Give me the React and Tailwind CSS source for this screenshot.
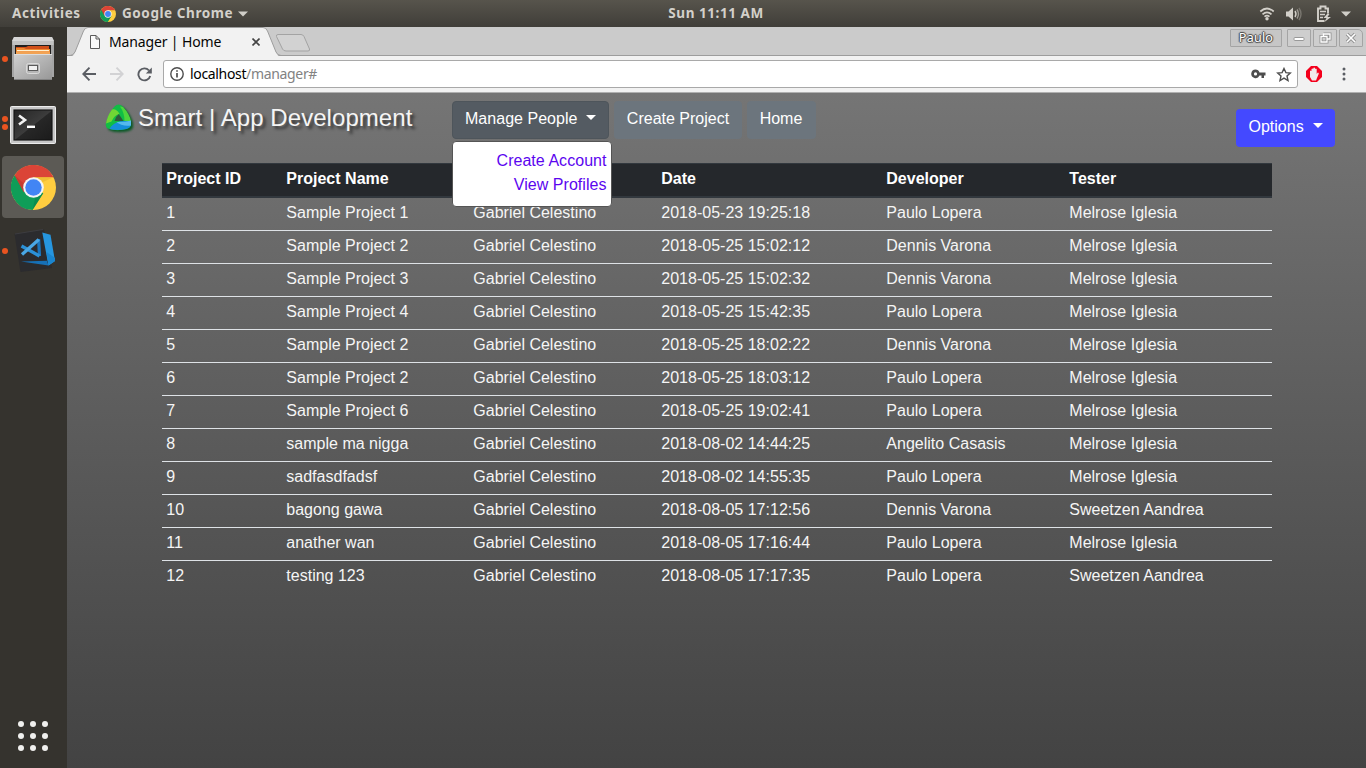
import React from "react";

const columns = "grid grid-cols-[120px_187px_188px_225px_183px_207px]";

const rows = [
  ["1", "Sample Project 1", "2018-05-23 19:25:18", "Paulo Lopera", "Melrose Iglesia"],
  ["2", "Sample Project 2", "2018-05-25 15:02:12", "Dennis Varona", "Melrose Iglesia"],
  ["3", "Sample Project 3", "2018-05-25 15:02:32", "Dennis Varona", "Melrose Iglesia"],
  ["4", "Sample Project 4", "2018-05-25 15:42:35", "Paulo Lopera", "Melrose Iglesia"],
  ["5", "Sample Project 2", "2018-05-25 18:02:22", "Dennis Varona", "Melrose Iglesia"],
  ["6", "Sample Project 2", "2018-05-25 18:03:12", "Paulo Lopera", "Melrose Iglesia"],
  ["7", "Sample Project 6", "2018-05-25 19:02:41", "Paulo Lopera", "Melrose Iglesia"],
  ["8", "sample ma nigga", "2018-08-02 14:44:25", "Angelito Casasis", "Melrose Iglesia"],
  ["9", "sadfasdfadsf", "2018-08-02 14:55:35", "Paulo Lopera", "Melrose Iglesia"],
  ["10", "bagong gawa", "2018-08-05 17:12:56", "Dennis Varona", "Sweetzen Aandrea"],
  ["11", "anather wan", "2018-08-05 17:16:44", "Paulo Lopera", "Melrose Iglesia"],
  ["12", "testing 123", "2018-08-05 17:17:35", "Paulo Lopera", "Sweetzen Aandrea"],
];

function ChromeLogo({ size }) {
  return (
    <svg width={size} height={size} viewBox="0 0 48 48" className="block shrink-0">
      <circle cx="24" cy="24" r="24" fill="#ffcd40" />
      <path d="M24 24 L3.8 11 A24 24 0 0 0 23 48 L34.4 30 Z" fill="#0f9d58" />
      <path d="M24 13 H45.4 A24 24 0 0 0 3.8 11 L13.6 29 Z" fill="#db4437" />
      <path d="M3.8 11 L13.6 29 L14 20 Z" fill="#b8372c" opacity=".6" />
      <path d="M24 13 H45.4 L34 18 Z" fill="#e6b22e" opacity=".6" />
      <path d="M23 48 L34.4 30 L26 34 Z" fill="#0a7d45" opacity=".5" />
      <circle cx="24" cy="24" r="11" fill="#f4f4f4" />
      <circle cx="24" cy="24" r="8.8" fill="#4285f4" />
    </svg>
  );
}

function FilesIcon() {
  return (
    <svg width="46" height="46" viewBox="10 36 46 46">
      <defs>
        <linearGradient id="drawer" x1="0" y1="0" x2="1" y2="1">
          <stop offset="0" stopColor="#d0d0d0" />
          <stop offset="1" stopColor="#979797" />
        </linearGradient>
      </defs>
      <path d="M14 37H52L54 41V77H12V41Z" fill="#a5a5a5" />
      <path d="M14 37H52L54 41H12Z" fill="#d6d6d6" />
      <rect x="12.500" y="41" width="41" height="4" fill="#c2c2c2" />
      <rect x="15" y="45" width="36" height="10" fill="#211f1e" />
      <path d="M16 47H26L28 46H49V50H16Z" fill="#d0501a" />
      <path d="M16 48H24L26 49H50V54H16Z" fill="#ee8a31" />
      <rect x="17" y="50" width="32" height="1.200" fill="#fff0d0" />
      <rect x="16" y="52" width="34" height="2" fill="#f2a354" />
      <rect x="14" y="54" width="38" height="26" rx="1" fill="url(#drawer)" />
      <path d="M14 54.500H52" stroke="#ddd" />
      <path d="M14 79.500H52" stroke="#828282" />
      <rect x="26.500" y="63.500" width="13" height="10" rx="2" fill="#b6b6b6" stroke="#dadada" />
      <rect x="28.500" y="65.500" width="9" height="5" fill="#f0f0f0" stroke="#5a5a5a" />
    </svg>
  );
}

function TerminalIcon() {
  return (
    <svg width="46" height="38" viewBox="0 0 46 38">
      <defs>
        <linearGradient id="screen" x1="0" y1="0" x2="1" y2="1">
          <stop offset="0" stopColor="#252525" />
          <stop offset=".5" stopColor="#3c3c3c" />
          <stop offset=".52" stopColor="#272727" />
          <stop offset="1" stopColor="#1b1b1b" />
        </linearGradient>
      </defs>
      <rect x=".5" y=".5" width="45" height="37" rx="1" fill="#c7c7c7" stroke="#ececec" />
      <rect x="3" y="3" width="40" height="32" fill="#b0b0b0" />
      <rect x="4" y="4" width="38" height="30" fill="url(#screen)" stroke="#111" />
      <path d="M9 9.500L15 14L9 18.500" fill="none" stroke="#f2f2f2" strokeWidth="2.600" />
      <path d="M17 20.800H25" stroke="#fff" strokeWidth="2.400" />
    </svg>
  );
}

function CodeIcon() {
  return (
    <svg width="46" height="46" viewBox="12 228 46 46">
      <path d="M14.500 234L44 229.500L52 268L20.500 272Z" fill="#2b2b2e" />
      <path d="M15 234L43 229.500" stroke="#3c3c40" />
      <path d="M42.300 232.500L50.500 234.800L55 261L48.500 265.500Z" fill="#2696df" />
      <path d="M46.500 252L55 258V261L48.500 265.500Z" fill="#1a85ce" />
      <path d="M21 261.500L47 260.800L48.500 265.500Z" fill="#1670b7" />
      <g fill="none" strokeWidth="3.200">
        <path d="M38.600 239L39.500 256" stroke="#1b75bd" />
        <path d="M21.500 246L39.500 256" stroke="#2b91d8" />
        <path d="M22 254.500L38.800 239.500" stroke="#4aa7e5" />
      </g>
    </svg>
  );
}

function DockItem({ dots, active, children }) {
  return (
    <div className="flex h-[62px] w-[67px] items-center">
      <div className="-mr-2 flex w-2 shrink-0 flex-col items-center gap-[2px] pl-[1px]">
        {Array.from({ length: dots }, (_, i) => (
          <span key={i} className="size-[6px] shrink-0 rounded-full bg-[#e95420]" />
        ))}
      </div>
      <div
        className={
          "ml-[2px] flex size-[62px] items-center justify-center rounded-[4px] " +
          (active ? "bg-[#5c5a55]" : "")
        }
      >
        {children}
      </div>
    </div>
  );
}

function Dock() {
  return (
    <aside className="flex w-[67px] shrink-0 flex-col gap-[2px] bg-[#35332e] pt-px">
      <DockItem dots={1}><FilesIcon /></DockItem>
      <DockItem dots={2}><div className="pt-1"><TerminalIcon /></div></DockItem>
      <DockItem dots={2} active><ChromeLogo size={45} /></DockItem>
      <DockItem dots={1}><div className="pl-1"><CodeIcon /></div></DockItem>
      <div className="mt-auto mb-[17px] ml-[18px] grid w-[30px] grid-cols-3 gap-[6px]">
        {Array.from({ length: 9 }, (_, i) => (
          <span key={i} className="size-[6px] rounded-full bg-[#f0f0ee]" />
        ))}
      </div>
    </aside>
  );
}

function TopBar() {
  return (
    <header className="grid h-[27px] grid-cols-[1fr_auto_1fr] items-center bg-linear-to-b from-[#57544c] to-[#403e39] text-[13.5px] font-bold text-[#d3d0ca]">
      <div className="flex items-center pl-3">
        <span className="w-[88px] whitespace-nowrap tracking-[0.6px]">Activities</span>
        <ChromeLogo size={16} />
        <span className="ml-[6px] w-[111px] whitespace-nowrap tracking-[0.58px]">Google Chrome</span>
        <svg width="10" height="6" viewBox="0 0 10 6" className="ml-[5px]"><path d="M0 .5H10L5 5.500Z" fill="#d0cec8" /></svg>
      </div>
      <span className="translate-x-[33px] whitespace-nowrap tracking-[0.55px]">Sun 11:11 AM</span>
      <div className="flex items-center justify-end pr-[15px]">
        <svg width="16" height="16" viewBox="0 0 16 16" className="-translate-x-px" fill="none" stroke="#d3d0ca" strokeWidth="1.700">
          <path d="M1.300 5.500Q8 -.5 14.700 5.500" /><path d="M3.500 8.300Q8 4.300 12.500 8.300" /><path d="M5.500 10.700Q8 8.700 10.500 10.700" />
          <circle cx="8" cy="12.700" r="1.700" fill="#d3d0ca" stroke="none" />
        </svg>
        <svg width="16" height="16" viewBox="0 0 16 16" className="mr-px ml-[10px]" fill="none" strokeWidth="1.400">
          <path d="M0 5.500H2.500L7 1.500V14.500L2.500 10.500H0Z" fill="#d3d0ca" />
          <path d="M9 5Q11 8 9 11" stroke="#d3d0ca" /><path d="M11 3.500Q14 8 11 12.500" stroke="#9b9891" /><path d="M13 2Q17 8 13 14" stroke="#79766f" />
        </svg>
        <svg width="16" height="18" viewBox="0 0 16 18" className="ml-[13px]" fill="none" stroke="#d3d0ca">
          <path d="M8.500 16H2V3.500H4.500V1.500H9.500V3.500H12V8.500" strokeWidth="1.900" />
          <path d="M4 6.500H10M4 9.500H9M4 12.500H7" strokeWidth="1.700" />
          <path d="M11.500 8.500L7.500 13H10.500L8.500 17L15 12H11.500L13.500 9" fill="#d3d0ca" stroke="none" />
        </svg>
        <svg width="10" height="6" viewBox="0 0 10 6" className="ml-[9px]"><path d="M0 .5H10L5 5.500Z" fill="#d0cec8" /></svg>
      </div>
    </header>
  );
}

function WindowButton({ children, last }) {
  return (
    <span
      className={
        "flex h-[18px] w-6 items-center justify-center rounded-[1px] border border-[#a4a4a4] bg-[#cecece] " +
        (last ? "rounded-tr-[5px]" : "")
      }
    >
      {children}
    </span>
  );
}

function TabStrip() {
  return (
    <div className="relative flex h-[29px] border-b border-[#9d9d9d] bg-[#cbcbcb]">
      <svg width="250" height="29" viewBox="0 0 250 29" className="absolute top-0 left-0">
        <path d="M5 29C7 28 7.500 27 8 25L16.500 4Q18 .5 21 .5H196Q199 .5 200.500 4L209 25Q210 28 212 29Z" fill="#f2f2f2" />
        <path d="M0 28.500H3Q6 28.500 8 25L16.500 4Q18 .5 21 .5H196Q199 .5 200.500 4L209 25Q210.500 28.500 214 28.500" fill="none" stroke="#9d9d9d" />
        <path d="M211 7.500H234Q236 7.500 237 9.500L242.500 22Q243 24 241 24H219Q216.500 24 215.500 22L209.500 9.500Q209 7.500 211 7.500Z" fill="#d2d2d2" stroke="#a3a3a3" />
      </svg>
      <div className="relative flex h-[30px] w-[206px] items-center pl-[23px]">
        <svg width="10" height="14" viewBox="0 0 10 14" fill="#fafafa" stroke="#5a5a5a"><path d="M.5 .5H6L9.500 4V13.500H.5ZM6 .5V4H9.500" /></svg>
        <span className="ml-[9px] w-[143px] pb-[2px] text-[14px] tracking-[-0.14px] whitespace-nowrap text-[#050505]">Manager | Home</span>
        <svg width="8" height="8" viewBox="0 0 8 8" className="shrink-0" stroke="#444" strokeWidth="1.600"><path d="M.5 .5L7.500 7.500M7.500 .5L.5 7.500" /></svg>
      </div>
      <div className="ml-auto flex gap-[2px] pt-[2px] pr-[3px]">
        <span className="mr-[3px] flex h-[18px] w-[52px] items-center justify-center rounded-[1px] border border-[#a4a4a4] bg-[#c6c6c6] text-[12.5px] tracking-[0.25px] text-white [text-shadow:1px_0_1px_#444,-1px_0_1px_#444,0_1px_1px_#444,0_-1px_1px_#444]">Paulo</span>
        <WindowButton><svg width="12" height="12" viewBox="0 0 12 12"><rect x="1" y="5.500" width="10" height="3" rx="1" fill="#fff" stroke="#999" /></svg></WindowButton>
        <WindowButton><svg width="13" height="12" viewBox="0 0 13 12" fill="none"><path d="M4.500 2H11V7H8.500M2 4.500H8V10H2Z" stroke="#929292" strokeWidth="3" /><path d="M4.500 4V2H11V7H8.500M2 4.500H8V10H2Z" stroke="#fff" strokeWidth="1.300" /></svg></WindowButton>
        <WindowButton last><svg width="12" height="12" viewBox="0 0 12 12"><path d="M2 2L10 10M10 2L2 10" stroke="#929292" strokeWidth="3.400" /><path d="M2 2L10 10M10 2L2 10" stroke="#fff" strokeWidth="1.600" /></svg></WindowButton>
      </div>
    </div>
  );
}

function Toolbar() {
  return (
    <div className="flex h-[37px] items-center border-b border-[#b0b0b0] bg-[#f2f2f2] pl-[15px]">
      <svg width="14" height="14" viewBox="0 0 14 14" fill="none" stroke="#5a5d63" strokeWidth="1.900"><path d="M14 7H1.500M7.500 .7L1.300 7L7.500 13.300" /></svg>
      <svg width="14" height="14" viewBox="0 0 14 14" className="ml-[14px]" fill="none" stroke="#d2d2d4" strokeWidth="1.900"><path d="M0 7H12.500M6.500 .7L12.700 7L6.500 13.300" /></svg>
      <svg width="15" height="15" viewBox="0 0 15 15" className="ml-[13px]" fill="none" stroke="#5a5d63" strokeWidth="1.900"><path d="M12 3.500A6 6 0 1 0 13.200 9" /><path d="M14.800 .5V6.500H8.800Z" fill="#5a5d63" stroke="none" /></svg>
      <div className="ml-[11px] flex h-7 w-[1135px] items-center rounded-[3px] border border-[#a9a9a9] bg-white pl-[6px] text-[14px]">
        <svg width="14" height="14" viewBox="0 0 14 14" fill="none" stroke="#4d4d4d" strokeWidth="1.400"><circle cx="7" cy="7" r="6.200" /><path d="M7 6V10.500M7 3.300V4.800" strokeWidth="1.700" /></svg>
        <span className="ml-[6px] pb-[2px] whitespace-nowrap tracking-[-0.34px] text-black">localhost<span className="text-[#828282]">/manager#</span></span>
        <svg width="15" height="10" viewBox="0 0 15 10" className="ml-auto"><path d="M4.500 .5A4.300 4.300 0 1 0 8.500 6.500H10.500V9H13V6.500H14.500V3.500H8.500A4.300 4.300 0 0 0 4.500 .5ZM4.500 3.300A1.600 1.600 0 1 1 4.500 6.500A1.600 1.600 0 1 1 4.500 3.300Z" fill="#4d4d4d" fillRule="evenodd" /></svg>
        <svg width="16" height="15" viewBox="0 0 16 15" className="mr-[5px] ml-[10px]" fill="none" stroke="#4d4d4d" strokeWidth="1.400"><path d="M8 1.500L9.900 5.600L14.300 6L11 9L12 13.500L8 11.100L4 13.500L5 9L1.700 6L6.100 5.600Z" /></svg>
      </div>
      <svg width="16" height="16" viewBox="0 0 16 16" className="ml-2">
        <path d="M5 0H11L16 5V11L11 16H5L0 11V5Z" fill="#f4001c" />
        <path d="M4 5Q4.800 4.200 5.500 5V3Q6.400 2 7.300 3V2Q8.200 1.200 9 2V3Q9.900 2.200 10.700 3V8L11.800 6.500Q13.200 6.500 12.700 8L11 12L10 14.500H6L4 11Z" fill="#f1e9e9" />
      </svg>
      <svg width="4" height="14" viewBox="0 0 4 14" className="ml-5" fill="#5a5d63"><circle cx="2" cy="2" r="1.500" /><circle cx="2" cy="7" r="1.500" /><circle cx="2" cy="12" r="1.500" /></svg>
    </div>
  );
}

function BrandLogo() {
  return (
    <svg width="30" height="30" viewBox="103.500 103.500 30 30" className="overflow-visible drop-shadow-[2px_2px_1px_rgba(0,85,30,0.9)]">
      <path d="M118 105Q121 105 123.500 108.500Q129.500 116 130.500 125Q130 128 126 129.500Q116 132 107 129Q104.500 127 105.500 123Q109 112 114 107Q116 105 118 105Z" fill="#10bd45" />
      <path d="M122.500 107.500Q129.500 115 130.500 122L124 121.500Q124 113 119.500 107Z" fill="#4dd43c" />
      <path d="M111.500 110Q116 109 119 114.500Q114 115 111 122L105.500 124Q107 116 111.500 110Z" fill="#70d635" />
      <path d="M118.300 114.500L123 121.500H114Q115 117 118.300 114.500Z" fill="#2d5a3c" />
      <path d="M110.500 127Q116 121.500 123 121.500H130.500V125Q130 128 126 129.500Q117 131.500 109 129.500Z" fill="#168edb" />
      <path d="M116 122.500Q124 123 130.500 121V126Q121 127 116 122.500Z" fill="#55b9ed" />
    </svg>
  );
}

function Caret() {
  return <span className="mb-[3px] ml-[9px] border-x-[5px] border-t-[5px] border-x-transparent border-t-white" />;
}

function ManagerPage() {
  return (
    <main className="flex-1 bg-linear-to-b from-[#757575] to-[#434343] font-['Liberation_Sans',Arial,sans-serif] text-base leading-6 text-white">
      <div className="flex h-[70px] items-start pt-2 pl-[37px]">
        <div className="flex w-[348px] items-center">
          <BrandLogo />
          <h1 className="ml-1 text-[24px] leading-[34px] tracking-[0.06px] whitespace-nowrap text-[#f5f5f5] [text-shadow:3px_3px_3px_rgba(30,30,30,0.7)]">Smart | App Development</h1>
        </div>
        <nav className="flex gap-[5px]">
          <div className="relative">
            <button className="flex h-[38px] w-[157px] items-center rounded-[4px] border border-[#4e555b] bg-[#545b62] pb-[3px] pl-3 tracking-[0.03px]">
              Manage People<Caret />
            </button>
            <div className="absolute top-[40px] left-0 z-10 flex h-[66px] w-[160px] flex-col rounded-[4px] border border-[#555] bg-white pt-[7px] pr-[4.5px] text-right tracking-[0.04px] text-[#5b05ef]">
              <a>Create Account</a>
              <a>View Profiles</a>
            </div>
          </div>
          <button className="h-[38px] w-[128px] rounded-[4px] bg-[#6c757d] pb-[3px]">Create Project</button>
          <button className="h-[38px] w-[69px] rounded-[4px] bg-[#6c757d] pr-px pb-[3px]">Home</button>
        </nav>
        <button className="mt-2 mr-[31px] ml-auto flex h-[38px] w-[99px] items-center rounded-[4px] bg-[#4449ff] pb-[3px] pl-[12.5px]">
          Options<Caret />
        </button>
      </div>
      <section className="ml-[95px] w-[1110px] tracking-[0.01px]">
        <div className={columns + " h-[35px] border-t border-b-2 border-[#32383e] bg-[#25282c] pt-[3px] font-bold *:pl-[4.3px]"}>
          <span>Project ID</span>
          <span>Project Name</span>
          <span />
          <span>Date</span>
          <span>Developer</span>
          <span>Tester</span>
        </div>
        {rows.map(([id, name, date, developer, tester]) => (
          <div key={id} className={columns + " h-[33px] border-b border-[#dee2e6] pt-[3px] text-[#f5f5f5] *:pl-[4.3px] last:border-b-0"}>
            <span>{id}</span>
            <span>{name}</span>
            <span>Gabriel Celestino</span>
            <span>{date}</span>
            <span>{developer}</span>
            <span>{tester}</span>
          </div>
        ))}
      </section>
    </main>
  );
}

export default function App() {
  return (
    <div className="flex h-[768px] w-[1366px] flex-col overflow-hidden font-['Noto_Sans',sans-serif]">
      <TopBar />
      <div className="flex min-h-0 flex-1">
        <Dock />
        <div className="flex min-w-0 flex-1 flex-col">
          <TabStrip />
          <Toolbar />
          <ManagerPage />
        </div>
      </div>
    </div>
  );
}
